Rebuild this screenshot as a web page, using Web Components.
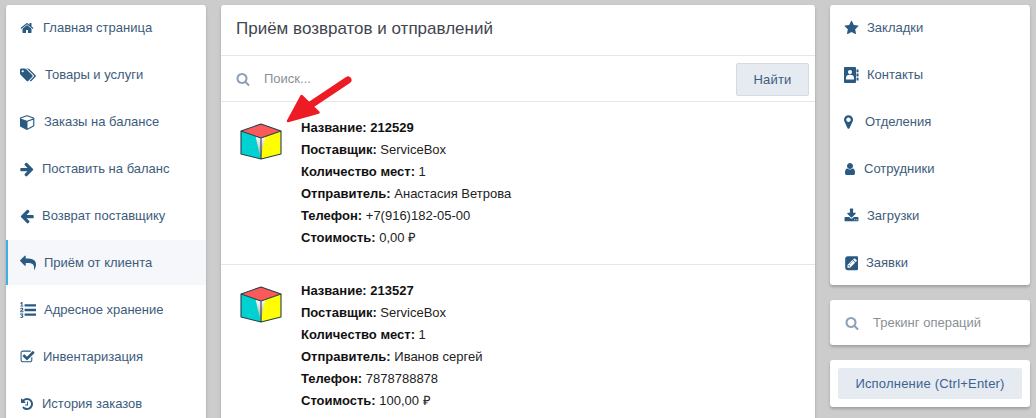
<!DOCTYPE html>
<html lang="ru"><head><meta charset="utf-8"><title>Приём возвратов и отправлений</title>
<style>
html,body{margin:0;height:418px;overflow:hidden;background:#ccc}
body{font:13px/22px "Liberation Sans",Arial,sans-serif}
</style></head><body>
<x-app>
  <x-col>
    <x-panel>
      <x-nav icon="home" w="14" gap="9">Главная страница</x-nav>
      <x-nav icon="tags" w="16" gap="9">Товары и услуги</x-nav>
      <x-nav icon="cube" w="15" gap="9">Заказы на балансе</x-nav>
      <x-nav icon="right" w="14" gap="8">Поставить на баланс</x-nav>
      <x-nav icon="left" w="14" gap="8">Возврат поставщику</x-nav>
      <x-nav icon="reply" w="16" gap="8" active>Приём от клиента</x-nav>
      <x-nav icon="listol" w="16" gap="8">Адресное хранение</x-nav>
      <x-nav icon="check" w="15" gap="8">Инвентаризация</x-nav>
      <x-nav icon="history" w="14" gap="8">История заказов</x-nav>
    </x-panel>
  </x-col>
  <x-col>
    <x-panel class="main">
      <x-title>Приём возвратов и отправлений</x-title>
      <x-search placeholder="Поиск..." action="Найти"></x-search>
      <x-shipment name="212529" supplier="ServiceBox" places="1" sender="Анастасия Ветрова" phone="+7(916)182-05-00" cost="0,00 ₽"></x-shipment>
      <x-shipment name="213527" supplier="ServiceBox" places="1" sender="Иванов сергей" phone="7878788878" cost="100,00 ₽"></x-shipment>
      <x-arrow></x-arrow>
    </x-panel>
  </x-col>
  <x-col class="side">
    <x-panel>
      <x-nav icon="star" w="15" gap="8" side>Закладки</x-nav>
      <x-nav icon="book" w="15" gap="8" side>Контакты</x-nav>
      <x-nav icon="marker" w="9" gap="12" side>Отделения</x-nav>
      <x-nav icon="user" w="12" gap="8" side>Сотрудники</x-nav>
      <x-nav icon="download" w="15" gap="8" side>Загрузки</x-nav>
      <x-nav icon="pencil" w="14" gap="8" side>Заявки</x-nav>
    </x-panel>
    <x-panel><x-tracking>Трекинг операций</x-tracking></x-panel>
    <x-panel><x-exec>Исполнение (Ctrl+Enter)</x-exec></x-panel>
  </x-col>
</x-app>
<script>
const ICONS={
home:"M1472 992v480q0 26-19 45t-45 19h-384v-384h-256v384h-384q-26 0-45-19t-19-45v-480q0-1 .5-3t.5-3l575-474 575 474q1 2 1 6zm223-69l-62 74q-8 9-21 11h-3q-13 0-21-7l-692-577-692 577q-12 8-24 7-13-2-21-11l-62-74q-8-10-7-23.5t11-21.5l719-599q32-26 76-26t76 26l244 204v-195q0-14 9-23t23-9h192q14 0 23 9t9 23v408l219 182q10 8 11 21.5t-7 23.5z",
tags:"M448 448q0-53-37.5-90.5t-90.5-37.5-90.5 37.5-37.5 90.5 37.5 90.5 90.5 37.5 90.5-37.5 37.5-90.5zm1067 576q0 53-37 90l-491 492q-39 37-91 37-53 0-90-37l-715-716q-38-37-64.5-101t-26.5-117v-416q0-52 38-90t90-38h416q53 0 117 26.5t102 64.5l715 714q37 39 37 91zm384 0q0 53-37 90l-491 492q-39 37-91 37-36 0-59-14t-53-45l470-470q37-37 37-90 0-52-37-91l-715-714q-38-38-102-64.5t-117-26.5h224q53 0 117 26.5t102 64.5l715 714q37 39 37 91z",
cube:"M896 1629l640-349v-636l-640 233v752zm-64-864l698-254-698-254-698 254zm832-252v768q0 35-18 65t-49 47l-704 384q-28 16-61 16t-61-16l-704-384q-31-17-49-47t-18-65v-768q0-40 23-73t61-47l704-256q22-8 44-8t44 8l704 256q38 14 61 47t23 73z",
right:"M1600 960q0 54-37 91l-651 651q-39 37-91 37-51 0-90-37l-75-75q-38-38-38-91t38-91l293-293h-704q-52 0-84.500-37.500t-32.500-90.500v-128q0-53 32.500-90.500t84.500-37.500h704l-293-294q-38-36-38-90t38-90l75-75q38-38 90-38 53 0 91 38l651 651q37 35 37 90z",
left:"M1664 896v128q0 53-32.500 90.500t-84.500 37.500h-704l293 294q38 36 38 90t-38 90l-75 76q-37 37-90 37-52 0-91-37l-651-652q-37-37-37-90 0-52 37-91l651-650q38-38 91-38 52 0 90 38l75 74q38 38 38 91t-38 91l-293 293h704q52 0 84.500 37.500t32.500 90.500z",
reply:"M1792 1120q0 166-127 451-3 7-10.500 24t-13.500 30-13 22q-12 17-28 17-15 0-23.500-10t-8.500-25q0-9 2.500-26.500t2.500-23.500q5-68 5-123 0-101-17.500-181t-48.500-138.500-80-101-105.500-69.500-133-42.500-154-21.500-175.500-6h-224v256q0 26-19 45t-45 19-45-19l-512-512q-19-19-19-45t19-45l512-512q19-19 45-19t45 19 19 45v256h224q713 0 875 403 53 134 53 333z",
listol:"M381 1620q0 80-54.500 126t-135.500 46q-106 0-172-66l57-88q49 45 106 45 29 0 50.500-14.500t21.500-42.500q0-64-105-56l-26-56q8-10 32.500-43.500t42.500-54 37-38.500v-1q-16 0-48.500 1t-48.500 1v53h-106v-152h333v88l-95 115q51 12 81 49t30 88zm2-627v159h-362q-6-36-6-54 0-51 23.500-93t56.500-68 66-47.500 56.500-43.500 23.500-45q0-25-14.500-38.500t-39.500-13.500q-46 0-81 58l-85-59q24-51 71.500-79.500t105.500-28.500q73 0 123 41.500t50 112.500q0 50-34 91.500t-75 64.500-75.500 50.500-35.500 52.500h127v-60h105zm1409 319v192q0 13-9.500 22.500t-22.500 9.500h-1216q-13 0-22.500-9.500t-9.500-22.500v-192q0-14 9-23t23-9h1216q13 0 22.500 9.500t9.500 22.500zm-1408-899v99h-335v-99h107q0-41 .5-122t.5-121v-12h-2q-8 17-50 54l-71-76 136-127h106v404h108zm1408 387v192q0 13-9.500 22.500t-22.500 9.500h-1216q-13 0-22.500-9.500t-9.500-22.500v-192q0-14 9-23t23-9h1216q13 0 22.500 9.500t9.500 22.500zm0-512v192q0 13-9.500 22.500t-22.500 9.500h-1216q-13 0-22.500-9.500t-9.500-22.500v-192q0-13 9.500-22.500t22.500-9.500h1216q13 0 22.500 9.500t9.500 22.500z",
check:"M1472 930v318q0 119-84.500 203.500t-203.500 84.500h-832q-119 0-203.500-84.500t-84.500-203.500v-832q0-119 84.500-203.500t203.500-84.500h832q63 0 117 25 15 7 18 23 3 17-9 29l-49 49q-10 10-23 10-3 0-9-2-23-6-45-6h-832q-66 0-113 47t-47 113v832q0 66 47 113t113 47h832q66 0 113-47t47-113v-254q0-13 9-22l64-64q10-10 23-10 6 0 12 3 20 8 20 29zm231-489l-814 814q-24 24-57 24t-57-24l-430-430q-24-24-24-57t24-57l110-110q24-24 57-24t57 24l263 263 647-647q24-24 57-24t57 24l110 110q24 24 24 57t-24 57z",
history:"M1664 896q0 156-61 298t-164 245-245 164-298 61q-172 0-327-72.500t-264-204.500q-7-10-6.500-22.500t8.500-20.500l137-138q10-9 25-9 16 2 23 12 73 95 179 147t225 52q104 0 198.500-40.500t163.500-109.500 109.500-163.500 40.500-198.500-40.500-198.500-109.500-163.500-163.500-109.500-198.500-40.500q-98 0-188 35.500t-160 101.500l137 138q31 30 14 69-17 40-59 40h-448q-26 0-45-19t-19-45v-448q0-42 40-59 39-17 69 14l130 129q107-101 244.500-156.500t284.500-55.500q156 0 298 61t245 164 164 245 61 298zm-640-288v448q0 14-9 23t-23 9h-320q-14 0-23-9t-9-23v-64q0-14 9-23t23-9h224v-352q0-14 9-23t23-9h64q14 0 23 9t9 23z",
star:"M1728 647q0 22-26 48l-363 354 86 500q1 7 1 20 0 21-10.500 35.500t-30.500 14.500q-19 0-40-12l-449-236-449 236q-22 12-40 12-21 0-31.500-14.500t-10.500-35.500q0-6 2-20l86-500-364-354q-25-27-25-48 0-37 56-46l502-73 225-455q19-41 49-41t49 41l225 455 502 73q56 9 56 46z",
book:"M112 0H1232Q1344 0 1344 112V1680Q1344 1792 1232 1792H112Q0 1792 0 1680V112Q0 0 112 0ZM1400 280h224v320h-224zM1400 740h224v320h-224zM1400 1200h224v320h-224zM672 330q-230 0-230 240t230 240 230-240-230-240zM672 860q-450 0-450 380v170h900v-170q0-380-450-380z",
marker:"M768 640q0-106-75-181t-181-75-181 75-75 181 75 181 181 75 181-75 75-181zm256 0q0 109-33 179l-364 774q-16 33-47.500 52t-67.500 19-67.500-19-46.500-52l-365-774q-33-70-33-179 0-212 150-362t362-150 362 150 150 362z",
user:"M1536 1399q0 109-62.500 187t-150.500 78h-854q-88 0-150.500-78t-62.500-187q0-85 8.500-160.500t31.500-152 58.500-131 94-89 134.500-34.500q131 128 313 128t313-128q76 0 134.500 34.500t94 89 58.500 131 31.500 152 8.500 160.500zm-256-887q0 159-112.500 271.500t-271.500 112.500-271.500-112.500-112.500-271.500 112.500-271.500 271.500-112.500 271.500 112.500 112.500 271.500z",
download:"M1344 1344q0-26-19-45t-45-19-45 19-19 45 19 45 45 19 45-19 19-45zm256 0q0-26-19-45t-45-19-45 19-19 45 19 45 45 19 45-19 19-45zm128-224v320q0 40-28 68t-68 28h-1472q-40 0-68-28t-28-68v-320q0-40 28-68t68-28h465l135 136q58 56 136 56t136-56l136-136h464q40 0 68 28t28 68zm-325-569q17 41-14 70l-448 448q-18 19-45 19t-45-19l-448-448q-31-29-14-70 17-39 59-39h256v-448q0-26 19-45t45-19h256q26 0 45 19t19 45v448h256q42 0 59 39z",
pencil:"M532 1108l152 152-52 52h-56v-96h-96v-56zm414-390q14 13-3 30l-291 291q-17 17-30 3-14-13 3-30l291-291q17-17 30-3zm-274 690l544-544-288-288-544 544v288h288zm608-608l92-92q28-28 28-68t-28-68l-152-152q-28-28-68-28t-68 28l-92 92 288 288zm384-368v960q0 119-84.500 203.500t-203.500 84.500h-960q-119 0-203.500-84.500t-84.500-203.500v-960q0-119 84.500-203.500t203.500-84.500h960q119 0 203.500 84.500t84.500 203.500z",
search:"M1216 832q0-185-131.500-316.500t-316.500-131.500-316.500 131.500-131.500 316.500 131.500 316.500 316.500 131.500 316.500-131.500 131.500-316.500zm512 832q0 52-38 90t-90 38q-54 0-90-38l-343-342q-179 124-399 124-143 0-273.500-55.500t-225-150-150-225-55.500-273.500 55.500-273.500 150-225 225-150 273.500-55.500 273.500 55.500 225 150 150 225 55.500 273.500q0 220-124 399l343 343q37 37 37 90z"
};
const VB={home:"0 0 1792 1792",tags:"0 0 1920 1792",cube:"64 0 1664 1792",right:"96 0 1600 1792",left:"96 0 1600 1792",reply:"0 0 1792 1792",listol:"0 0 1792 1792",check:"0 0 1792 1792",history:"0 0 1792 1792",star:"0 0 1792 1792",book:"0 0 1680 1792",marker:"0 0 1024 1792",user:"128 0 1536 1792",download:"0 0 1792 1792",pencil:"0 128 1536 1536",search:"0 0 1792 1792"};
const icon=(n,w,h,c)=>`<svg viewBox="${VB[n]}" width="${w}" height="${h}" fill="${c||'currentColor'}" aria-hidden="true"><path d="${ICONS[n]}"/></svg>`;
const def=(tag,css,html)=>customElements.define(tag,class extends HTMLElement{
  constructor(){super();this.attachShadow({mode:'open'})}
  connectedCallback(){const a=n=>this.getAttribute(n);this.shadowRoot.innerHTML=`<style>${css}</style>`+html(a,this)}
});
def('x-app',`:host{display:grid;grid-template-columns:200px 594px 200px;column-gap:15px;padding:5px 6px;height:408px;align-items:start}`,()=>`<slot></slot>`);
def('x-col',`:host{display:flex;flex-direction:column;gap:15px}`,()=>`<slot></slot>`);
def('x-panel',`:host{display:block;position:relative;background:#fff;border-radius:3px;box-shadow:0 2px 3px rgba(0,0,0,.22)}`,()=>`<slot></slot>`);
def('x-nav',`:host{display:flex;align-items:center;height:45px;margin-bottom:2px;padding-left:14px;color:#3d5c7c;box-sizing:border-box}
:host(:last-child){margin-bottom:0}
:host([active]){background:#f5f7fa;box-shadow:inset 2px 0 0 #3bb0e8}
.i{display:flex;align-items:center;justify-content:flex-start;color:#2a5a82;flex:none}`,
a=>{const w=+a('w');return `<span class="i" style="width:${w}px;margin-right:${a('gap')}px">${icon(a('icon'),w,16)}</span><span><slot></slot></span>`});
def('x-title',`:host{display:block;height:50px;line-height:48px;padding-left:15px;font-size:17px;color:#3f4650;border-bottom:1px solid #e6e6e6}`,()=>`<slot></slot>`);
def('x-search',`:host{display:flex;align-items:center;height:45px;padding:0 6px 0 15px;border-bottom:1px solid #e6e6e6;color:#8a8f96}
.g{color:#8ea0b6;display:flex;margin-right:14px}
.p{flex:1}
button{width:73px;height:33px;margin-top:1px;padding:0;background:#e6ebf2;border:1px solid #d5dbe3;border-radius:2px;color:#3b5d80;font:13px "Liberation Sans",Arial,sans-serif;letter-spacing:.2px}`,
a=>`<span class="g">${icon('search',14,14)}</span><span class="p">${a('placeholder')}</span><button>${a('action')}</button>`);
def('x-cube',`:host{display:block;width:42px;height:38px}`,()=>`<svg width="42" height="38" viewBox="0 0 42 38">
<defs>
<linearGradient id="w" x1="0" x2="0" y1="0" y2="1"><stop offset="0" stop-color="#fff"/><stop offset="1" stop-color="#9a9a9a"/></linearGradient>
</defs>
<path d="M21 1 41 8 21 15 1 8Z" fill="#fb5a5a"/>
<path d="M1 8 21 15V36L1 31Z" fill="#00d2d2"/>
<path d="M41 8 21 15V36L41 31Z" fill="#ffff00"/>
<path d="M21 15 15.500 13Q18 25 21 36 22 25 25.500 13.500Z" fill="url(#w)"/>
<path d="M21 1 41 8V31L21 36 1 31V8ZM1 8 21 15 41 8M21 15V36" fill="none" stroke="#26404c" stroke-width="1.1" stroke-linejoin="round"/>
</svg>`);
def('x-shipment',`:host{display:flex;padding:15px 0 15px 19px;border-bottom:1px solid #e6e6e6;color:#222}
x-cube{margin-top:6px;margin-right:19px}
b{color:#111}
div{height:22px;white-space:nowrap}`,
a=>`<x-cube></x-cube><section><div><b>Название: ${a('name')}</b></div><div><b>Поставщик:</b> ${a('supplier')}</div><div><b>Количество мест:</b> ${a('places')}</div><div><b>Отправитель:</b> ${a('sender')}</div><div><b>Телефон:</b> ${a('phone')}</div><div><b>Стоимость:</b> ${a('cost')}</div></section>`);
def('x-arrow',`:host{position:absolute;left:60px;top:68px;width:80px;height:56px;pointer-events:none}`,()=>`<svg width="80" height="56" viewBox="0 0 80 56"><path d="M7 48 20.500 23 37.500 39.500Z" fill="#ed1c24" stroke="#ed1c24" stroke-width="2.500" stroke-linejoin="round"/><path d="M28 33 67 7" stroke="#ed1c24" stroke-width="7" stroke-linecap="round" fill="none"/></svg>`);
def('x-tracking',`:host{display:flex;align-items:center;height:45px;padding-left:15px;color:#8a8f96}
.g{color:#8ea0b6;display:flex;margin-right:14px}`,()=>`<span class="g">${icon('search',14,14)}</span><span><slot></slot></span>`);
def('x-exec',`:host{display:block;padding:8px}
div{height:31px;line-height:31px;text-align:center;background:#e6ebf2;border-radius:2px;color:#3b6390;letter-spacing:.2px}`,()=>`<div><slot></slot></div>`);
</script>
</body></html>
